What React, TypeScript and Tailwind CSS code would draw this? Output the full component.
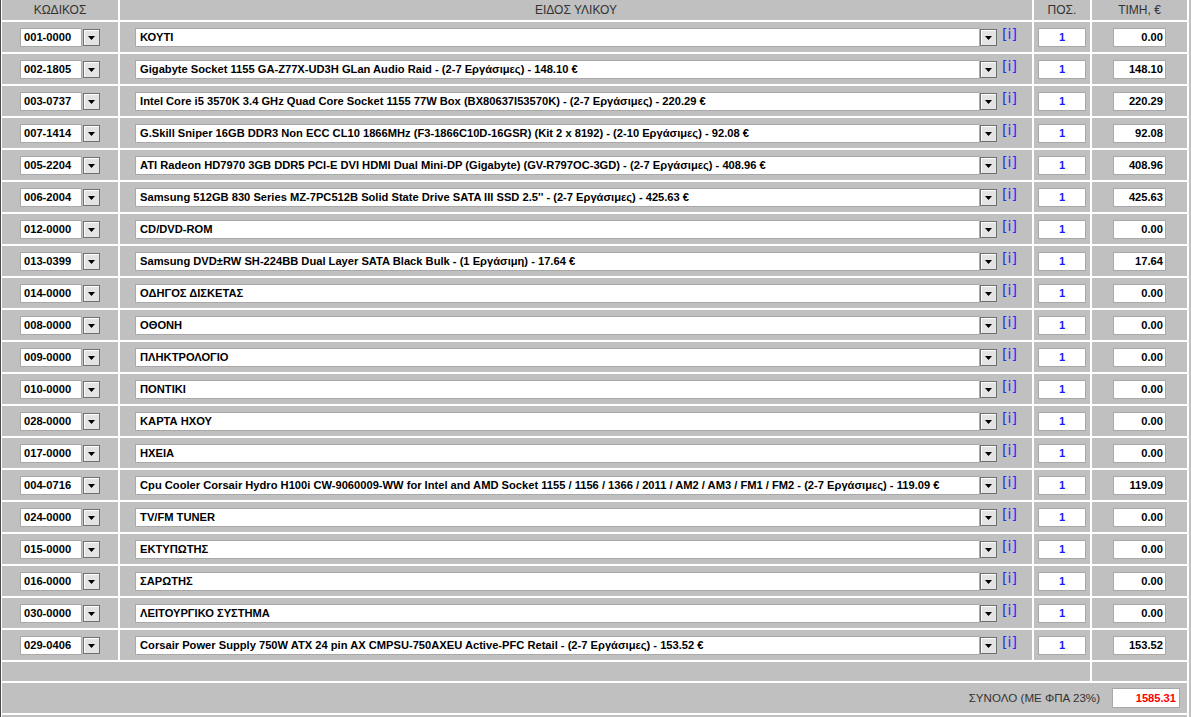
import React from 'react';

interface Line {
  code: string;
  item: string;
  price: string;
}

const lines: Line[] = [
  { code: '001-0000', item: 'ΚΟΥΤΙ', price: '0.00' },
  { code: '002-1805', item: 'Gigabyte Socket 1155 GA-Z77X-UD3H GLan Audio Raid - (2-7 Εργάσιμες) - 148.10 €', price: '148.10' },
  { code: '003-0737', item: 'Intel Core i5 3570K 3.4 GHz Quad Core Socket 1155 77W Box (BX80637I53570K) - (2-7 Εργάσιμες) - 220.29 €', price: '220.29' },
  { code: '007-1414', item: 'G.Skill Sniper 16GB DDR3 Non ECC CL10 1866MHz (F3-1866C10D-16GSR) (Kit 2 x 8192) - (2-10 Εργάσιμες) - 92.08 €', price: '92.08' },
  { code: '005-2204', item: 'ATI Radeon HD7970 3GB DDR5 PCI-E DVI HDMI Dual Mini-DP (Gigabyte) (GV-R797OC-3GD) - (2-7 Εργάσιμες) - 408.96 €', price: '408.96' },
  { code: '006-2004', item: "Samsung 512GB 830 Series MZ-7PC512B Solid State Drive SATA III SSD 2.5'' - (2-7 Εργάσιμες) - 425.63 €", price: '425.63' },
  { code: '012-0000', item: 'CD/DVD-ROM', price: '0.00' },
  { code: '013-0399', item: 'Samsung DVD±RW SH-224BB Dual Layer SATA Black Bulk - (1 Εργάσιμη) - 17.64 €', price: '17.64' },
  { code: '014-0000', item: 'ΟΔΗΓΟΣ ΔΙΣΚΕΤΑΣ', price: '0.00' },
  { code: '008-0000', item: 'ΟΘΟΝΗ', price: '0.00' },
  { code: '009-0000', item: 'ΠΛΗΚΤΡΟΛΟΓΙΟ', price: '0.00' },
  { code: '010-0000', item: 'ΠΟΝΤΙΚΙ', price: '0.00' },
  { code: '028-0000', item: 'ΚΑΡΤΑ ΗΧΟΥ', price: '0.00' },
  { code: '017-0000', item: 'ΗΧΕΙΑ', price: '0.00' },
  { code: '004-0716', item: 'Cpu Cooler Corsair Hydro H100i CW-9060009-WW for Intel and AMD Socket 1155 / 1156 / 1366 / 2011 / AM2 / AM3 / FM1 / FM2 - (2-7 Εργάσιμες) - 119.09 €', price: '119.09' },
  { code: '024-0000', item: 'TV/FM TUNER', price: '0.00' },
  { code: '015-0000', item: 'ΕΚΤΥΠΩΤΗΣ', price: '0.00' },
  { code: '016-0000', item: 'ΣΑΡΩΤΗΣ', price: '0.00' },
  { code: '030-0000', item: 'ΛΕΙΤΟΥΡΓΙΚΟ ΣΥΣΤΗΜΑ', price: '0.00' },
  { code: '029-0406', item: 'Corsair Power Supply 750W ATX 24 pin AX CMPSU-750AXEU Active-PFC Retail - (2-7 Εργάσιμες) - 153.52 €', price: '153.52' },
];

// old-school combo arrow button
function DropBtn() {
  return (
    <div className="w-[17px] h-[17px] shrink-0 border border-[#6f6f6f] bg-[#e4e4e4] flex items-center justify-center shadow-[inset_1px_1px_0_#ffffff]">
      <svg width="7" height="4" viewBox="0 0 7 4" className="mt-[2px]">
        <path d="M0 0h7L3.5 4z" fill="#000" />
      </svg>
    </div>
  );
}

const field = 'h-[19px] bg-white border border-[#a9a9a9] text-[11.15px] font-bold leading-[17px] whitespace-nowrap overflow-hidden';

export default function App() {
  return (
    <div className="w-[1191px] h-[717px] overflow-hidden bg-white flex font-['Liberation_Sans',Arial,sans-serif]">
      <div className="w-px bg-[#4a4a4a] shrink-0" />
      <div className="w-px shrink-0" />
      <div className="grid grid-cols-[116px_912px_56px_95px] gap-[2px] content-start">
        {/* header */}
        <div className="h-[20px] bg-[#c0c0c0] flex items-center justify-center text-[12px] text-[#333]">ΚΩΔΙΚΟΣ</div>
        <div className="h-[20px] bg-[#c0c0c0] flex items-center justify-center text-[12px] text-[#333]">ΕΙΔΟΣ ΥΛΙΚΟΥ</div>
        <div className="h-[20px] bg-[#c0c0c0] flex items-center justify-center text-[12px] text-[#333]">ΠΟΣ.</div>
        <div className="h-[20px] bg-[#c0c0c0] flex items-center justify-center text-[12px] text-[#333]">ΤΙΜΗ, €</div>

        {lines.map((l) => (
          <React.Fragment key={l.code}>
            <div className="h-[30px] bg-[#c0c0c0] flex items-center justify-center gap-px">
              <div className={`${field} w-[62px] pl-[3px] text-black`}>{l.code}</div>
              <DropBtn />
            </div>
            <div className="h-[30px] bg-[#c0c0c0] flex items-center justify-center">
              <div className={`${field} w-[845px] pl-[4px] text-black`}>{l.item}</div>
              <DropBtn />
              <span className="ml-[5px] mb-[7px] text-[14px] leading-none text-[#2a2aff] font-['DejaVu_Sans',sans-serif]">[i]</span>
            </div>
            <div className="h-[30px] bg-[#c0c0c0] flex items-center justify-center">
              <div className={`${field} w-[48px] text-center text-[#1a1aff]`}>1</div>
            </div>
            <div className="h-[30px] bg-[#c0c0c0] flex items-center justify-center">
              <div className={`${field} w-[53px] text-right pr-[2px] text-black`}>{l.price}</div>
            </div>
          </React.Fragment>
        ))}

        <div className="col-span-3 h-[19px] bg-[#c0c0c0]" />
        <div className="h-[19px] bg-[#c0c0c0]" />

        <div className="col-span-4 h-[30px] bg-[#c0c0c0] flex items-center justify-end pr-[7px] gap-[12px]">
          <span className="text-[11.6px] text-[#333]">ΣΥΝΟΛΟ (ΜΕ ΦΠΑ 23%)</span>
          <div className={`${field} w-[68px] text-right pr-[3px] text-[#ff0000] h-[20px] leading-[18px]`}>1585.31</div>
        </div>
        <div className="col-span-4 h-[30px] bg-[#c0c0c0]" />
      </div>
      <div className="w-[2px] shrink-0" />
      <div className="w-[2px] bg-[#c0c0c0] shrink-0" />
    </div>
  );
}
